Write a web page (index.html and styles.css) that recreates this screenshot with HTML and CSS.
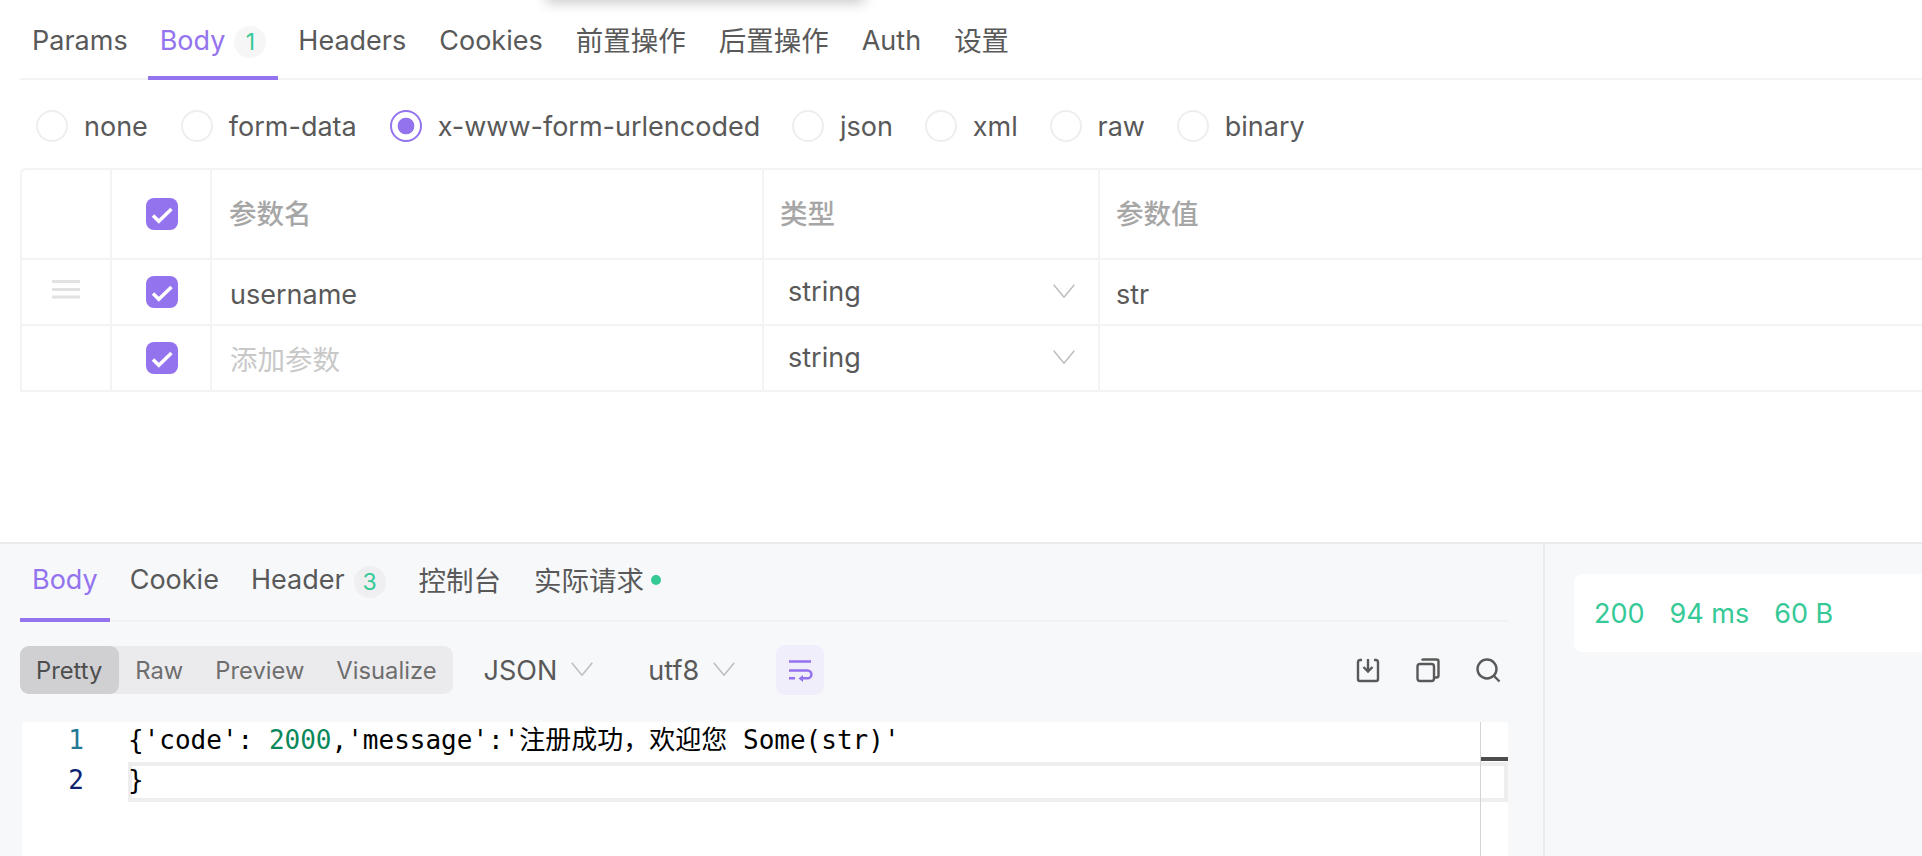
FILE: index.html
```html
<!DOCTYPE html>
<html lang="zh">
<head>
<meta charset="utf-8">
<title>Request</title>
<link rel="stylesheet" href="styles.css">
</head>
<body>
<div class="popover-shadow"></div>
<section class="request">
  <nav class="tabs">
    <a class="tab">Params</a>
    <a class="tab active">Body<span class="badge">1</span></a>
    <a class="tab">Headers</a>
    <a class="tab">Cookies</a>
    <a class="tab cjk">前置操作</a>
    <a class="tab cjk">后置操作</a>
    <a class="tab">Auth</a>
    <a class="tab cjk">设置</a>
  </nav>
  <div class="radios">
    <label class="radio"><i class="dot"></i>none</label>
    <label class="radio"><i class="dot"></i>form-data</label>
    <label class="radio on"><i class="dot"></i>x-www-form-urlencoded</label>
    <label class="radio"><i class="dot"></i>json</label>
    <label class="radio"><i class="dot"></i>xml</label>
    <label class="radio"><i class="dot"></i>raw</label>
    <label class="radio"><i class="dot"></i>binary</label>
  </div>
  <div class="table">
    <div class="row head">
      <div class="cell c-drag"></div>
      <div class="cell c-check"><svg class="check" viewBox="0 0 32 32"><rect width="32" height="32" rx="8"/><path d="M7 17.500l5.800 5.800L25.500 11"/></svg></div>
      <div class="cell c-name"><span class="label">参数名</span></div>
      <div class="cell c-type"><span class="label">类型</span></div>
      <div class="cell c-value"><span class="label">参数值</span></div>
    </div>
    <div class="row">
      <div class="cell c-drag"><svg class="drag" viewBox="0 0 28 19"><rect width="28" height="3"/><rect y="8" width="28" height="3"/><rect y="15.500" width="28" height="3"/></svg></div>
      <div class="cell c-check"><svg class="check" viewBox="0 0 32 32"><rect width="32" height="32" rx="8"/><path d="M7 17.500l5.800 5.800L25.500 11"/></svg></div>
      <div class="cell c-name"><span class="input">username</span></div>
      <div class="cell c-type"><span class="select">string</span><svg class="chev" viewBox="0 0 22 14"><path d="M.7.7L11 13.200 21.300.7"/></svg></div>
      <div class="cell c-value"><span class="input">str</span></div>
    </div>
    <div class="row">
      <div class="cell c-drag"></div>
      <div class="cell c-check"><svg class="check" viewBox="0 0 32 32"><rect width="32" height="32" rx="8"/><path d="M7 17.500l5.800 5.800L25.500 11"/></svg></div>
      <div class="cell c-name"><span class="input placeholder">添加参数</span></div>
      <div class="cell c-type"><span class="select">string</span><svg class="chev" viewBox="0 0 22 14"><path d="M.7.7L11 13.200 21.300.7"/></svg></div>
      <div class="cell c-value"></div>
    </div>
  </div>
</section>
<section class="response">
  <div class="resp-main">
    <nav class="tabs resp-tabs">
      <a class="tab active">Body</a>
      <a class="tab">Cookie</a>
      <a class="tab">Header<span class="badge">3</span></a>
      <a class="tab cjk">控制台</a>
      <a class="tab cjk">实际请求<i class="live"></i></a>
    </nav>
    <div class="toolbar">
      <div class="segmented">
        <span class="seg active">Pretty</span>
        <span class="seg">Raw</span>
        <span class="seg">Preview</span>
        <span class="seg">Visualize</span>
      </div>
      <div class="drop drop-json">JSON<svg class="chev" viewBox="0 0 22 14"><path d="M.7.7L11 13.200 21.300.7"/></svg></div>
      <div class="drop drop-enc">utf8<svg class="chev" viewBox="0 0 22 14"><path d="M.7.7L11 13.200 21.300.7"/></svg></div>
      <button class="wrap">
        <svg viewBox="0 0 24 20" width="24" height="20"><path d="M1 1.500h22M1 10.500h18.500a3.800 3.800 0 0 1 0 7.800H13M1 18.300h6"/><path class="fill" d="M15 15v7l-4.500-3.500z"/></svg>
      </button>
      <div class="actions">
        <svg viewBox="0 0 24 24"><path d="M6 2H4a2 2 0 0 0-2 2v17a2 2 0 0 0 2 2h16a2 2 0 0 0 2-2V4a2 2 0 0 0-2-2h-2M12 1v12M7.500 9l4.500 4.500L16.500 9"/></svg>
        <svg viewBox="0 0 24 24"><rect x="1.500" y="6" width="16.500" height="17" rx="2.500"/><path d="M6 2.500A1.500 1.500 0 0 1 7.500 1.500h13A2 2 0 0 1 22.500 3.500v14a2 2 0 0 1-2 2H18"/></svg>
        <svg viewBox="0 0 24 24"><circle cx="11" cy="11" r="9.500"/><path d="M18 18l5.500 5.500"/></svg>
      </div>
    </div>
    <div class="editor">
      <div class="line"><span class="ln ln-1">1</span><code class="code">{'code': <b class="num">2000</b>,'message':'注册成功，欢迎您 Some(str)'</code></div>
      <div class="line current"><span class="ln ln-2">2</span><code class="code">}</code></div>
      <div class="minimap"><i class="mark"></i></div>
    </div>
  </div>
  <aside class="resp-side">
    <div class="status"><span>200</span><span>94 ms</span><span>60 B</span></div>
  </aside>
</section>
</body>
</html>
```
FILE: styles.css
```css
* { box-sizing: border-box; }
html, body { margin: 0; height: 856px; overflow: hidden; }
body {
  position: relative;
  width: 1922px;
  background: #fff;
  color: #595959;
  font-family: Inter, "Noto Sans CJK SC", sans-serif;
  font-size: 27px;
}
.popover-shadow {
  position: absolute;
  left: 548px;
  top: -16px;
  width: 314px;
  height: 16px;
  box-shadow: 0 0 14px 2px rgba(0, 0, 0, .24);
}
.request {
  height: 544px;
  padding-left: 20px;
  border-bottom: 2px solid #ebebed;
}
.tabs {
  display: flex;
  gap: 9px;
  height: 80px;
  border-bottom: 2px solid #f3f3f3;
}
.tab {
  position: relative;
  display: flex;
  align-items: center;
  padding: 2px 12px 0;
}
.tab:nth-child(-n+2) { margin-right: -1px; }
.tab.cjk { font-size: 27.500px; padding-top: 0; }
.tab.active { color: #9373ee; }
.tab.active::after {
  content: "";
  position: absolute;
  left: 0;
  right: 0;
  bottom: -2px;
  height: 4px;
  background: #9373ee;
}
.badge {
  display: flex;
  align-items: center;
  justify-content: center;
  width: 32px;
  height: 32px;
  margin: 4px 0 0 9px;
  border-radius: 50%;
  background: #f6f6f6;
  color: #35c996;
  font-size: 23px;
}
.radios {
  display: flex;
  align-items: center;
  gap: 33px;
  height: 88px;
  padding: 4px 0 0 16px;
}
.radio { display: flex; align-items: center; gap: 16px; }
.radio:nth-child(n+4) { margin-left: -1.200px; }
.dot {
  display: block;
  width: 32px;
  height: 32px;
  border: 2px solid #eeeeee;
  border-radius: 50%;
}
.radio.on .dot {
  border-color: #9373ee;
  background: radial-gradient(circle, #9373ee 0 8px, transparent 8.700px);
}
.table {
  border-top: 2px solid #f3f3f3;
  border-left: 2px solid #f3f3f3;
  border-top-left-radius: 6px;
}
.row {
  display: flex;
  height: 66px;
  border-bottom: 2px solid #f3f3f3;
}
.row.head { height: 90px; color: #a6a6a6; font-weight: 500; font-size: 27.500px; }
.label { padding-bottom: 4px; }
.cell { display: flex; align-items: center; border-right: 2px solid #f3f3f3; }
.c-drag { width: 90px; justify-content: center; }
.c-check { width: 100px; justify-content: center; padding-left: 2px; }
.c-name { width: 552px; padding-left: 17px; }
.c-type { width: 336px; padding: 0 23px 0 16px; justify-content: space-between; }
.c-value { flex: 1; padding-left: 16px; border-right: 0; }
.check { display: block; width: 32px; height: 32px; }
.check rect { fill: #9373ee; }
.check path { fill: none; stroke: #fff; stroke-width: 3.500; }
.drag { display: block; width: 28px; height: 19px; margin: 0 0 6px; fill: #e2e2e2; }
.input { padding: 4px 0 0 1px; }
.c-value .input { padding-left: 0; }
.placeholder { padding-top: 0; font-size: 27.500px; color: #c8c8c8; }
.select { padding: 0 0 2px 8px; }
.chev { display: block; flex: none; width: 22px; height: 14px; margin-bottom: 2px; }
.chev path { fill: none; stroke: #bdbdbd; stroke-width: 1.500; }
.response {
  display: flex;
  height: 312px;
  background: #f7f8fa;
}
.resp-main {
  display: flex;
  flex-direction: column;
  width: 1545px;
  padding: 0 35px 0 20px;
  border-right: 2px solid #ebebee;
}
.resp-tabs { flex: none; height: 78px; border-bottom-color: #f2f2f5; }
.resp-tabs .tab { padding-top: 0; padding-bottom: 6px; }
.resp-tabs .badge { margin-top: 6px; background: #efeff1; }
.live {
  display: block;
  width: 10px;
  height: 10px;
  margin: 2px 0 0 7px;
  border-radius: 50%;
  background: #35c996;
}
.toolbar {
  flex: none;
  display: flex;
  align-items: center;
  height: 100px;
  padding: 23px 8px 27px 0;
}
.segmented {
  display: flex;
  height: 48px;
  border-radius: 9px;
  background: #ebebed;
  font-size: 23.750px;
  color: #6e6e6e;
}
.seg { display: flex; align-items: center; padding: 0 16px; }
.seg.active {
  padding: 0 17px 0 16px;
  border-radius: 9px;
  background: #d0d0d2;
  color: #4d4d4d;
}
.drop { display: flex; align-items: center; gap: 14px; }
.drop-json { margin-left: 31px; }
.drop-enc { margin-left: 55px; }
.wrap {
  display: flex;
  align-items: center;
  justify-content: center;
  width: 48px;
  height: 50px;
  margin-left: 41px;
  padding: 0;
  border: 0;
  border-radius: 9px;
  background: #f0eefb;
}
.wrap svg { fill: none; stroke: #9373ee; stroke-width: 2.600; overflow: visible; }
.wrap .fill { fill: #9373ee; stroke: none; }
.actions { display: flex; gap: 36px; margin-left: auto; }
.actions svg {
  display: block;
  width: 24px;
  height: 24px;
  fill: none;
  stroke: #595959;
  stroke-width: 2.400;
  overflow: visible;
}
.editor {
  position: relative;
  flex: 1;
  margin-left: 2px;
  border-radius: 4px 4px 0 0;
  background: #fff;
  font-family: "DejaVu Sans Mono", "Noto Sans CJK SC", monospace;
  font-size: 26px;
  color: #000;
}
.line { display: flex; height: 40px; line-height: 37px; }
.ln { flex: none; width: 62px; text-align: right; }
.ln-1 { color: #237893; }
.ln-2 { color: #0b216f; }
.code { flex: 1; margin-left: 44px; font: inherit; white-space: pre; }
.line.current .code { box-shadow: inset 0 0 0 4px #eeeeee; }
.num { color: #09885a; font-weight: 400; }
.minimap {
  position: absolute;
  left: 1458px;
  top: 0;
  bottom: 0;
  right: 0;
  border-left: 1px solid #d4d4d4;
}
.mark { position: absolute; top: 35px; left: 0; right: 0; height: 4px; background: #4d4d4d; }
.resp-side { flex: 1; padding: 30px 0 0 29px; }
.status {
  display: flex;
  align-items: center;
  gap: 25px;
  height: 78px;
  padding-left: 20px;
  border-radius: 8px 0 0 8px;
  background: #fff;
  color: #35c996;
}
```
